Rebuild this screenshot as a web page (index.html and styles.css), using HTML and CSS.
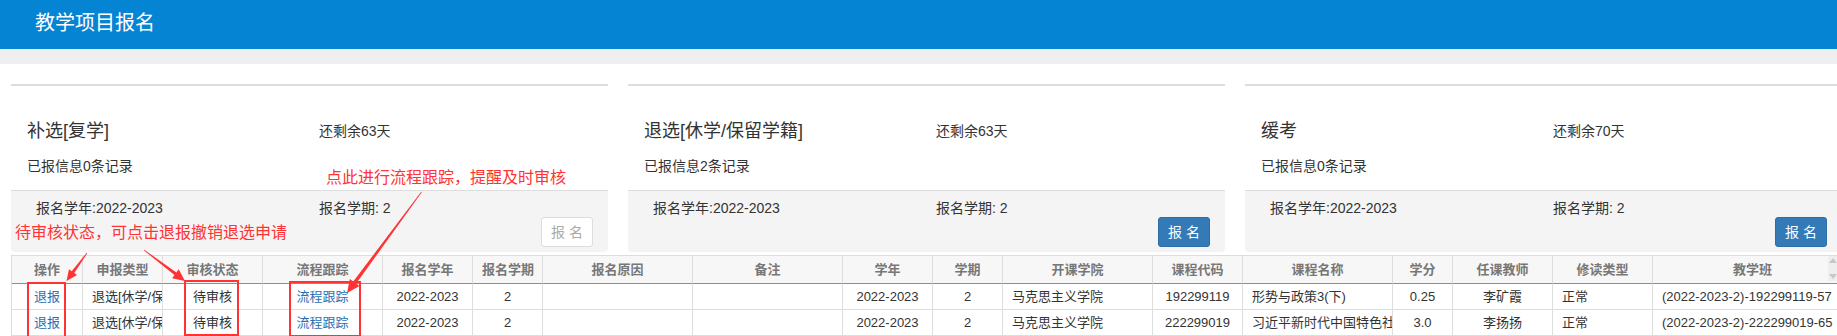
FILE: index.html
```html
<!DOCTYPE html>
<html lang="zh-CN">
<head>
<meta charset="UTF-8">
<meta name="viewport" content="width=device-width, initial-scale=1.0">
<title>教学项目报名</title>
<link rel="stylesheet" href="styles.css">
</head>
<body>

<div class="topbar">
    <h1>教学项目报名</h1>
</div>
<div class="band"></div>

<div class="main">
    <div class="cards">
        <div class="card">
            <div class="card-body">
                <div class="line1"><span class="card-title">补选[复学]</span><span>还剩余63天</span></div>
                <div class="line2">已报信息0条记录</div>
            </div>
            <div class="card-foot">
                <div class="foot-line"><span>报名学年:2022-2023</span><span>报名学期: 2</span></div>
                <div class="foot-btn"><button class="btn btn-off">报 名</button></div>
            </div>
        </div>
        <div class="card">
            <div class="card-body">
                <div class="line1"><span class="card-title">退选[休学/保留学籍]</span><span>还剩余63天</span></div>
                <div class="line2">已报信息2条记录</div>
            </div>
            <div class="card-foot">
                <div class="foot-line"><span>报名学年:2022-2023</span><span>报名学期: 2</span></div>
                <div class="foot-btn"><button class="btn btn-blue">报 名</button></div>
            </div>
        </div>
        <div class="card">
            <div class="card-body">
                <div class="line1"><span class="card-title">缓考</span><span>还剩余70天</span></div>
                <div class="line2">已报信息0条记录</div>
            </div>
            <div class="card-foot">
                <div class="foot-line"><span>报名学年:2022-2023</span><span>报名学期: 2</span></div>
                <div class="foot-btn"><button class="btn btn-blue">报 名</button></div>
            </div>
        </div>
    </div>

    <table class="grid">
        <colgroup>
            <col style="width: 71px">
            <col style="width: 80px">
            <col style="width: 100px">
            <col style="width: 120px">
            <col style="width: 90px">
            <col style="width: 70px">
            <col style="width: 150px">
            <col style="width: 150px">
            <col style="width: 90px">
            <col style="width: 70px">
            <col style="width: 150px">
            <col style="width: 90px">
            <col style="width: 150px">
            <col style="width: 60px">
            <col style="width: 100px">
            <col style="width: 100px">
            <col style="width: 200px">
        </colgroup>
        <thead>
            <tr>
                <th>操作</th>
                <th>申报类型</th>
                <th>审核状态</th>
                <th>流程跟踪</th>
                <th>报名学年</th>
                <th>报名学期</th>
                <th>报名原因</th>
                <th>备注</th>
                <th>学年</th>
                <th>学期</th>
                <th>开课学院</th>
                <th>课程代码</th>
                <th>课程名称</th>
                <th>学分</th>
                <th>任课教师</th>
                <th>修读类型</th>
                <th class="last">教学班<span class="sort"><i class="up"></i><i class="down"></i></span></th>
            </tr>
        </thead>
        <tbody>
            <tr>
                <td><a href="#">退报</a></td>
                <td class="left">退选[休学/保留学籍]</td>
                <td>待审核</td>
                <td><a href="#">流程跟踪</a></td>
                <td>2022-2023</td>
                <td>2</td>
                <td></td>
                <td></td>
                <td>2022-2023</td>
                <td>2</td>
                <td class="left">马克思主义学院</td>
                <td>192299119</td>
                <td class="left">形势与政策3(下)</td>
                <td>0.25</td>
                <td>李矿霞</td>
                <td class="left">正常</td>
                <td class="left">(2022-2023-2)-192299119-57</td>
            </tr>
            <tr>
                <td><a href="#">退报</a></td>
                <td class="left">退选[休学/保留学籍]</td>
                <td>待审核</td>
                <td><a href="#">流程跟踪</a></td>
                <td>2022-2023</td>
                <td>2</td>
                <td></td>
                <td></td>
                <td>2022-2023</td>
                <td>2</td>
                <td class="left">马克思主义学院</td>
                <td>222299019</td>
                <td class="left">习近平新时代中国特色社会主义思想概论</td>
                <td>3.0</td>
                <td>李扬扬</td>
                <td class="left">正常</td>
                <td class="left">(2022-2023-2)-222299019-65</td>
            </tr>
        </tbody>
    </table>
</div>

<!-- screenshot annotations -->
<div class="marks">
    <span class="note note-a">待审核状态，可点击退报撤销退选申请</span>
    <span class="note note-b">点此进行流程跟踪，提醒及时审核</span>
    <div class="box box-a"></div>
    <div class="box box-b"></div>
    <div class="box box-c"></div>
    <svg class="arrows" width="1837" height="336" viewBox="0 0 1837 336">
        <polygon points="87.32,253.24 74.29,273.05 77.0,275.1 66.5,281 69.0,269.2 71.71,271.15 86.68,252.76"/>
        <polygon points="143.76,250.32 174.46,275.04 172.10,278.15 185,281 178.74,269.37 176.38,272.48 144.24,249.68"/>
        <polygon points="421.82,192.24 356.17,283.61 359.55,286.10 347,293 349.89,278.98 353.27,281.47 421.18,191.76"/>
    </svg>
</div>

</body>
</html>
```

FILE: styles.css
```css
html, body {
    overflow: hidden;
}
body {
    margin: 0;
    padding: 0;
    font-family: "Liberation Sans", "Noto Sans CJK SC", sans-serif;
    font-size: 14px;
    color: #333;
    background-color: #fff;
}
.topbar {
    height: 49px;
    background-color: #0584d4;
}
.topbar h1 {
    margin: 0;
    padding-left: 35px;
    font-size: 20px;
    font-weight: normal;
    line-height: 46px;
    color: #fff;
}
.band {
    height: 15px;
    background-color: #efefef;
}
.main {
    padding: 20px 0 0 11px;
}
.cards {
    display: grid;
    grid-template-columns: 597px 597px 597px;
    column-gap: 20px;
    width: 1831px;
}
.card {
    border-top: 2px solid #ddd;
}
.card-body {
    padding: 30px 16px 14px;
}
.line1 {
    display: grid;
    grid-template-columns: 292px 1fr;
    align-items: center;
    height: 30px;
    line-height: 30px;
}
.card-title {
    font-size: 18px;
}
.line2 {
    margin-top: 10px;
    line-height: 20px;
}
.card-foot {
    padding: 7px 15px 5px 25px;
    background-color: #f4f4f4;
    border-top: 1px solid #ddd;
    border-radius: 0 0 4px 4px;
}
.foot-line {
    display: grid;
    grid-template-columns: 283px 1fr;
    line-height: 20px;
}
.foot-btn {
    display: flex;
    justify-content: flex-end;
    margin-top: -1px;
}
.btn {
    width: 52px;
    height: 30px;
    padding: 0;
    border: 1px solid #ddd;
    border-radius: 3px;
    font-family: inherit;
    font-size: 14px;
    line-height: 28px;
}
.btn-off {
    background-color: #fff;
    color: #aaa;
}
.btn-blue {
    background-color: #337ab7;
    border-color: #2e6da4;
    color: #fff;
}
.grid {
    margin-top: 3px;
    width: 1842px;
    table-layout: fixed;
    border-collapse: separate;
    border-spacing: 0;
    border-top: 1px solid #ddd;
    border-left: 1px solid #ddd;
    font-size: 13px;
}
.grid th, .grid td {
    padding: 0 9px;
    border-right: 1px solid #ddd;
    text-align: center;
    white-space: nowrap;
    overflow: hidden;
}
.grid th {
    height: 27px;
    line-height: 27px;
    font-weight: bold;
    color: #777;
    background-color: #f7f7f7;
    border-bottom: 1px solid #5b9bd5;
}
.grid td {
    height: 25px;
    line-height: 25px;
    border-bottom: 1px solid #ddd;
    color: #333;
}
.grid td.left {
    text-align: left;
    text-overflow: clip;
}
.grid a {
    color: #2a6fb5;
    text-decoration: none;
}
.grid th.last {
    position: relative;
}
.sort {
    position: absolute;
    left: 175px;
    top: 0;
    width: 10px;
    height: 25px;
    background-color: #eee;
}
.sort i {
    position: absolute;
    left: 1px;
    width: 0;
    height: 0;
    border-left: 4px solid transparent;
    border-right: 4px solid transparent;
}
.sort .up {
    top: 2px;
    border-bottom: 5px solid #c8c8c8;
}
.sort .down {
    bottom: 2px;
    border-top: 5px solid #c8c8c8;
}
.marks {
    position: absolute;
    top: 0;
    left: 0;
    width: 1837px;
    height: 336px;
    pointer-events: none;
}
.note {
    position: absolute;
    font-size: 16px;
    line-height: 20px;
    color: #f33;
    white-space: nowrap;
}
.note-a {
    left: 15px;
    top: 223px;
}
.note-b {
    left: 326px;
    top: 168px;
}
.box {
    position: absolute;
    border: 2px solid #f33;
    height: 52px;
}
.box-a {
    left: 27px;
    top: 282px;
    width: 35px;
}
.box-b {
    left: 184px;
    top: 280px;
    width: 51px;
}
.box-c {
    left: 289px;
    top: 281px;
    width: 68px;
}
.arrows {
    position: absolute;
    top: 0;
    left: 0;
}
.arrows polygon {
    fill: #f33;
}
```
